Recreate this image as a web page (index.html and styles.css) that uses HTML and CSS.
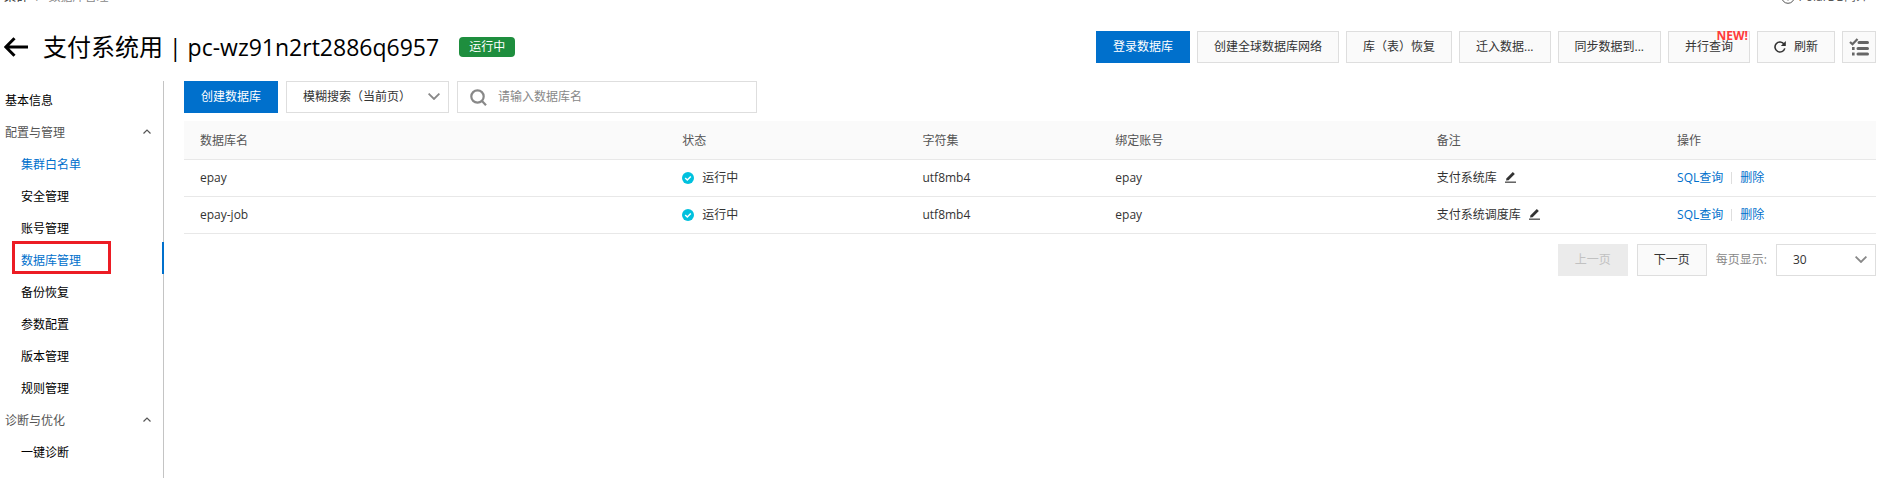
FILE: index.html
```html
<!DOCTYPE html>
<html lang="zh-CN">
<head>
<meta charset="utf-8">
<title>数据库管理</title>
<link rel="stylesheet" href="styles.css">
</head>
<body>
<div class="topbar">
  <nav class="crumbs" aria-label="位置"><a href="#" class="crumb-root">集群</a><span>/</span><span>数据库管理</span></nav>
  <a href="#" class="intro"><svg width="14" height="14" viewBox="0 0 14 14" fill="none" stroke="#555"><circle cx="7" cy="7" r="6.3"/><path d="M5.2 5.4a1.8 1.8 0 1 1 1.8 2v1M7 9.6v1"/></svg>PolarDB简介</a>
</div>
<header class="header">
  <button class="back" type="button" aria-label="返回"><svg width="24" height="20" viewBox="0 0 24 20" fill="none" stroke="#000" stroke-width="3"><path d="M2 10H24M10.5 1.2L1.8 10L10.5 18.8"/></svg></button>
  <h1 class="title">支付系统用<span class="title-id"> | pc-wz91n2rt2886q6957</span></h1>
  <span class="badge">运行中</span>
  <div class="actions">
    <button type="button" class="btn primary">登录数据库</button>
    <button type="button" class="btn">创建全球数据库网络</button>
    <button type="button" class="btn">库（表）恢复</button>
    <button type="button" class="btn">迁入数据...</button>
    <button type="button" class="btn">同步数据到...</button>
    <button type="button" class="btn tagged">并行查询<span class="new">NEW!</span></button>
    <button type="button" class="btn refresh"><svg width="12" height="12" viewBox="0 0 12 12"><path d="M10 3A5 5 0 1 0 10.8 7.4" fill="none" stroke="#333" stroke-width="1.6"/><path d="M11.8 0V5H6.8Z" fill="#333"/></svg>刷新</button>
    <button type="button" class="btn square" aria-label="任务列表"><svg width="20" height="18" viewBox="0 0 20 18" fill="none" stroke="#666"><path d="M1 4L3.5 6.3L8.5 1" stroke-width="2.2"/><path d="M10 4.5H18.5M9 10.5H18.5M9 16H18.5" stroke-width="3" stroke-linecap="round"/><path d="M3 10.5H5.6M3 16H5.6" stroke-width="2.8"/></svg></button>
  </div>
</header>
<div class="body">
  <nav class="side" aria-label="菜单">
    <a href="#" class="item">基本信息</a>
    <button type="button" class="item group">配置与管理<svg width="8" height="9" viewBox="0 0 8 9" fill="none" stroke="#555" stroke-width="1.2"><path d="M.5 4.5L4 1L7.5 4.5"/></svg></button>
    <a href="#" class="item sub link">集群白名单</a>
    <a href="#" class="item sub">安全管理</a>
    <a href="#" class="item sub">账号管理</a>
    <a href="#" class="item sub active" aria-current="page">数据库管理</a>
    <a href="#" class="item sub">备份恢复</a>
    <a href="#" class="item sub">参数配置</a>
    <a href="#" class="item sub">版本管理</a>
    <a href="#" class="item sub">规则管理</a>
    <button type="button" class="item group">诊断与优化<svg width="8" height="9" viewBox="0 0 8 9" fill="none" stroke="#555" stroke-width="1.2"><path d="M.5 4.5L4 1L7.5 4.5"/></svg></button>
    <a href="#" class="item sub">一键诊断</a>
  </nav>
  <main class="main">
    <div class="filters">
      <button type="button" class="btn primary create">创建数据库</button>
      <div class="select mode">
        <select aria-label="搜索方式"><option>模糊搜索（当前页）</option></select>
        <svg width="12" height="7" viewBox="0 0 12 7" fill="none" stroke="#888" stroke-width="1.8"><path d="M.6 .6L6 6L11.4 .6"/></svg>
      </div>
      <label class="search"><svg width="17" height="17" viewBox="0 0 17 17" fill="none" stroke="#888" stroke-width="2.2"><circle cx="7.5" cy="7.5" r="6.2"/><path d="M12 12L16 16.2"/></svg><input type="text" placeholder="请输入数据库名" aria-label="数据库名"></label>
    </div>
    <table class="table">
      <colgroup><col class="c-name"><col class="c-state"><col class="c-set"><col class="c-user"><col class="c-note"><col></colgroup>
      <thead><tr><th>数据库名</th><th>状态</th><th>字符集</th><th>绑定账号</th><th>备注</th><th>操作</th></tr></thead>
      <tbody>
        <tr>
          <td>epay</td>
          <td><span class="state"><svg width="12" height="12" viewBox="0 0 12 12"><circle cx="6" cy="6" r="6" fill="#00c1de"/><path d="M3.2 6L5.3 8L8.8 4.4" fill="none" stroke="#fff" stroke-width="1.5"/></svg>运行中</span></td>
          <td>utf8mb4</td>
          <td>epay</td>
          <td><span class="note">支付系统库<button type="button" class="edit" aria-label="编辑备注"><svg width="11" height="11" viewBox="0 0 11 11"><path d="M0 10.2H11" stroke="#555" stroke-width="1.4"/><path d="M1 8.6L1.6 6.2L7.8 0L9.8 2L3.6 8.2Z" fill="#333"/></svg></button></span></td>
          <td><span class="ops"><a href="#">SQL查询</a><i class="bar"></i><a href="#">删除</a></span></td>
        </tr>
        <tr>
          <td>epay-job</td>
          <td><span class="state"><svg width="12" height="12" viewBox="0 0 12 12"><circle cx="6" cy="6" r="6" fill="#00c1de"/><path d="M3.2 6L5.3 8L8.8 4.4" fill="none" stroke="#fff" stroke-width="1.5"/></svg>运行中</span></td>
          <td>utf8mb4</td>
          <td>epay</td>
          <td><span class="note">支付系统调度库<button type="button" class="edit" aria-label="编辑备注"><svg width="11" height="11" viewBox="0 0 11 11"><path d="M0 10.2H11" stroke="#555" stroke-width="1.4"/><path d="M1 8.6L1.6 6.2L7.8 0L9.8 2L3.6 8.2Z" fill="#333"/></svg></button></span></td>
          <td><span class="ops"><a href="#">SQL查询</a><i class="bar"></i><a href="#">删除</a></span></td>
        </tr>
      </tbody>
    </table>
    <div class="pager">
      <button type="button" class="btn page" disabled>上一页</button>
      <button type="button" class="btn page">下一页</button>
      <label for="size">每页显示:</label>
      <div class="select size">
        <select id="size"><option>30</option></select>
        <svg width="12" height="7" viewBox="0 0 12 7" fill="none" stroke="#888" stroke-width="1.8"><path d="M.6 .6L6 6L11.4 .6"/></svg>
      </div>
    </div>
  </main>
</div>
</body>
</html>
```
FILE: styles.css
```css
* { box-sizing: border-box; }
html, body { height: 100%; }
body {
  margin: 0;
  display: flex;
  flex-direction: column;
  overflow: hidden;
  background: #fff;
  color: #333;
  font: 12px/16px "Open Sans", "Noto Sans CJK SC", sans-serif;
}
a { color: inherit; text-decoration: none; }
button, input, select { font: inherit; color: inherit; margin: 0; }
button { cursor: pointer; }
svg { flex: none; display: block; }

.topbar {
  display: flex;
  justify-content: space-between;
  margin-top: -11px;
  padding: 0 28px 0 4px;
  color: #888;
}
.crumbs { display: flex; gap: 8px; }
.crumb-root { color: #333; }
.intro { display: flex; align-items: center; gap: 4px; color: #555; }

.header {
  display: flex;
  align-items: center;
  padding: 26px 20px 18px 4px;
}
.back { padding: 0; border: 0; background: none; }
.title {
  margin: 0 0 0 15px;
  color: #000;
  font-size: 24px;
  line-height: 32px;
  font-weight: 400;
  white-space: nowrap;
}
.title-id { font-size: 23px; font-weight: 500; }
.badge {
  margin-left: 20px;
  padding: 2px 10px;
  border-radius: 4px;
  background: #1e8e3e;
  color: #fff;
  white-space: nowrap;
}
.actions { display: flex; gap: 7px; margin-left: auto; }

.btn {
  height: 32px;
  padding: 0 16px;
  border: 1px solid #dedede;
  background: #fafafa;
  color: #333;
  white-space: nowrap;
}
.btn.primary { background: #0070cc; border-color: #0070cc; color: #fff; }
.btn:disabled { background: #ebebeb; border-color: #ebebeb; color: #c1c1c1; }
.tagged { position: relative; }
.new {
  position: absolute;
  top: -4px;
  right: 1px;
  color: #ff3b3b;
  font-weight: 700;
}
.refresh { display: flex; align-items: center; gap: 8px; }
.square { padding: 0 6px; }

.body { display: flex; flex: 1; min-height: 0; }
.side {
  width: 164px;
  flex: none;
  padding-top: 1px;
  border-right: 1px solid #c4c4c4;
}
.item {
  position: relative;
  display: flex;
  justify-content: space-between;
  align-items: center;
  width: 100%;
  height: 32px;
  padding: 6px 12px 0 5px;
  border: 0;
  background: none;
  color: #000;
}
.group { color: #555; }
.sub { padding-left: 21px; }
.link, .active { color: #0070cc; }
.active::before {
  content: "";
  position: absolute;
  inset: -1px 52px 0 12px;
  border: 3px solid #ec1c24;
}
.active::after {
  content: "";
  position: absolute;
  inset: 0 -1px 0 auto;
  width: 2px;
  background: #0070cc;
}

.main { flex: 1; min-width: 0; padding: 0 20px; }
.filters { display: flex; gap: 8px; margin-bottom: 8px; }
.select { position: relative; height: 32px; }
.select select {
  width: 100%;
  height: 100%;
  padding: 0 16px;
  border: 1px solid #dedede;
  border-radius: 0;
  background: #fff;
  appearance: none;
}
.select svg { position: absolute; right: 9px; top: 12px; pointer-events: none; }
.mode { width: 163px; }
.size { width: 100px; }
.search {
  display: flex;
  align-items: center;
  gap: 11px;
  width: 300px;
  height: 32px;
  padding: 0 12px;
  border: 1px solid #dedede;
}
.search input { flex: 1; min-width: 0; padding: 0; border: 0; outline: 0; background: none; }
.search input::placeholder { color: #888; opacity: 1; }

.table { width: 100%; border-collapse: collapse; table-layout: fixed; }
.c-name { width: 28.5%; }
.c-state { width: 14.2%; }
.c-set { width: 11.4%; }
.c-user { width: 19%; }
.c-note { width: 14.2%; }
.table th, .table td {
  padding: 0 16px;
  border-bottom: 1px solid #e8e8e8;
  text-align: left;
  font-weight: 400;
}
.table th { height: 38px; padding-top: 2px; background: #fafafa; color: #555; }
.table td { height: 37px; }
.state, .note, .ops { display: flex; align-items: center; gap: 8px; }
.edit { padding: 0; border: 0; background: none; }
.ops { color: #0070cc; }
.bar { width: 1px; height: 12px; background: #dedede; }

.pager {
  display: flex;
  justify-content: flex-end;
  align-items: center;
  gap: 9px;
  margin-top: 10px;
  color: #888;
}
.pager select { color: #333; }
```
